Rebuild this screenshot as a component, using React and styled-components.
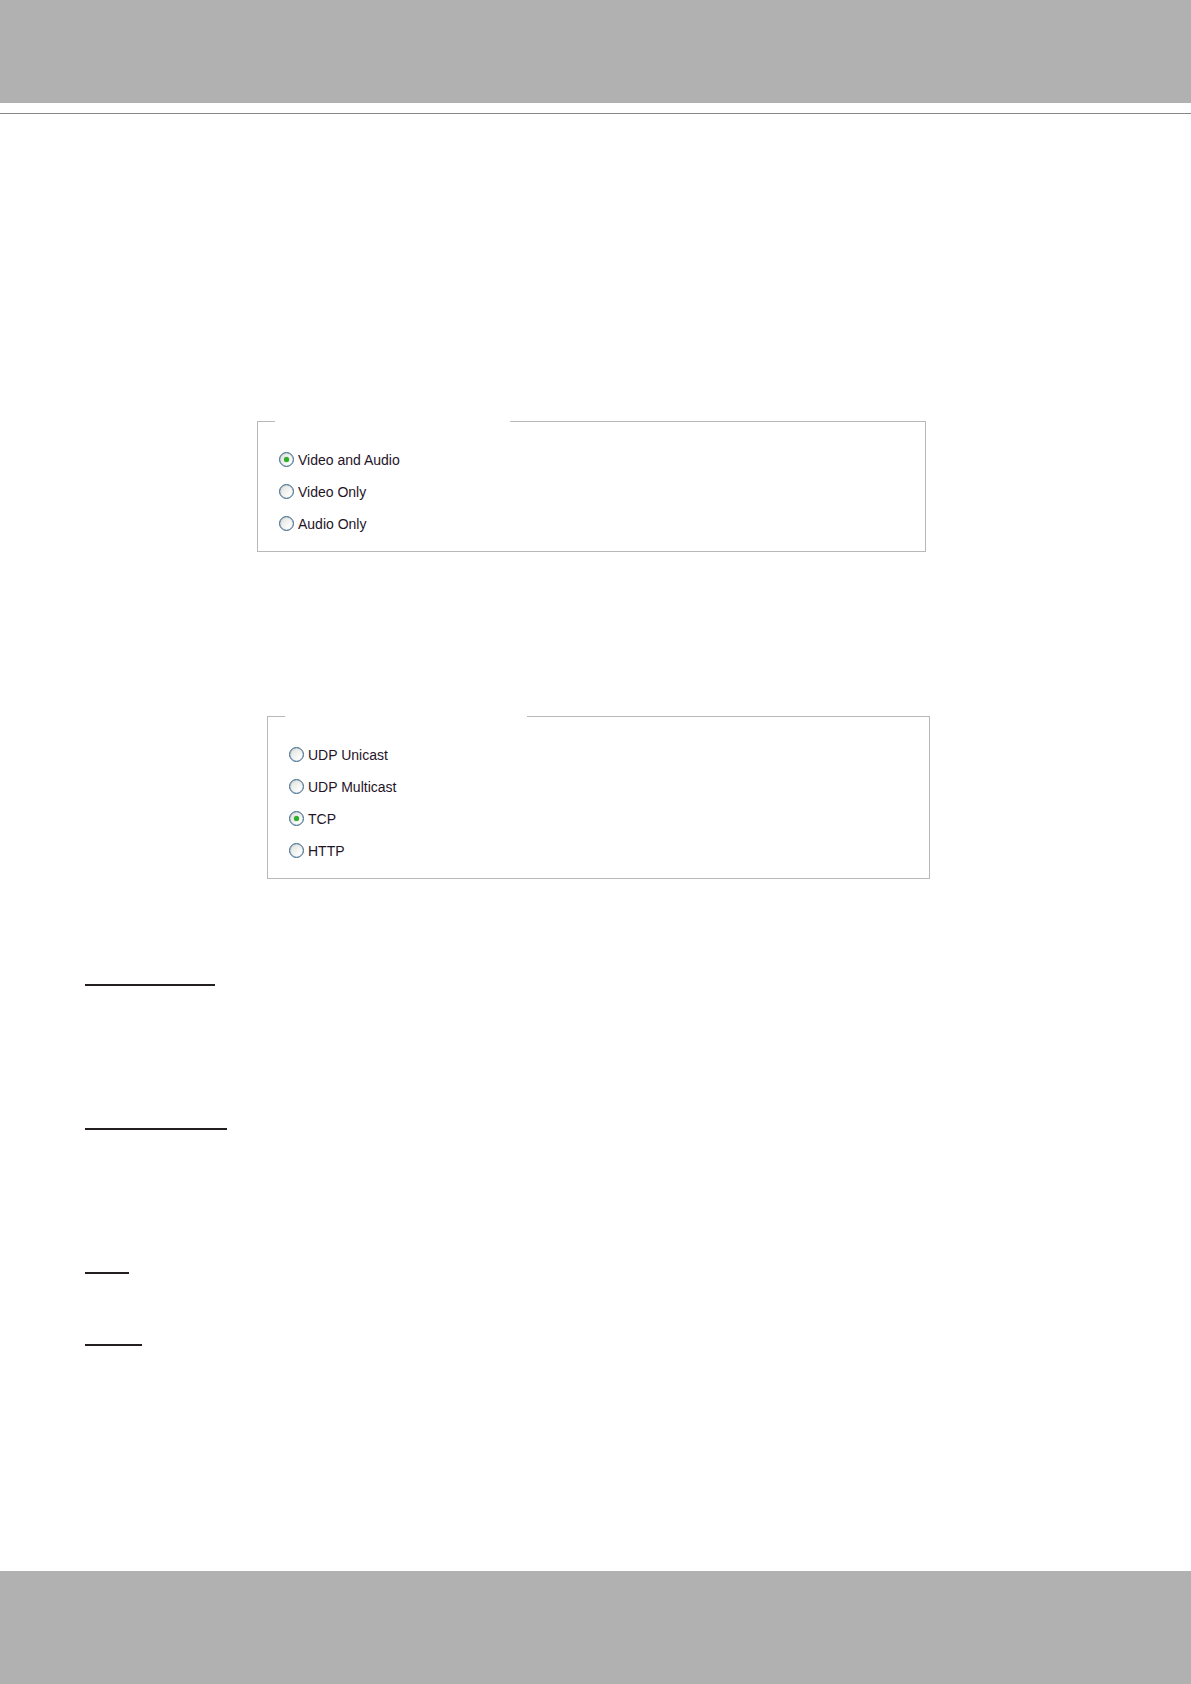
import React, { useState } from 'react';
import styled, { createGlobalStyle } from 'styled-components';

const GlobalStyle = createGlobalStyle`
  * {
    box-sizing: border-box;
  }

  body {
    margin: 0;
    background-color: #ffffff;
    color: #231f20;
    font-family: 'Liberation Sans', Arial, sans-serif;
    font-size: 14px;
  }
`;

const Page = styled.div`
  min-height: 100vh;
  display: flex;
  flex-direction: column;
`;

const Header = styled.header`
  padding-bottom: 10px;
  border-bottom: 1px solid #888888;

  div {
    height: 103px;
    background-color: #b1b1b1;
  }
`;

const Footer = styled.footer`
  height: 113px;
  margin-top: auto;
  background-color: #b1b1b1;
`;

const Main = styled.main`
  padding: 307px 85px 0;
`;

const Group = styled.fieldset`
  min-width: 0;
  margin: ${({ $margin }) => $margin};
  padding: 21px 21px 12px;
  border: 1px solid #b8b8b6;

  legend {
    width: ${({ $gap }) => $gap}px;
    height: 1px;
    margin-left: -4px;
    padding: 0;
  }
`;

const Option = styled.label`
  display: flex;
  align-items: center;
  gap: 4px;
  width: fit-content;
  height: 32px;
  line-height: 16px;
  color: #1f1428;

  span {
    padding-top: 2px;
  }
`;

const Radio = styled.input`
  appearance: none;
  display: grid;
  place-items: center;
  width: 15px;
  height: 15px;
  margin: 0;
  border: 1px solid #3c6788;
  border-radius: 50%;
  background: linear-gradient(135deg, #dededa, #ffffff 80%);
  box-shadow: inset 0 0 1px #3c6788;

  &:checked::before {
    content: '';
    width: 5px;
    height: 5px;
    border-radius: 50%;
    background-color: #2fae2c;
    box-shadow: 0 0 1px #2fae2c;
  }
`;

const Sections = styled.div`
  display: flex;
  flex-direction: column;
  margin-top: 105px;
`;

const Rule = styled.hr`
  width: ${({ $width }) => $width}px;
  height: 2px;
  margin: 0 0 ${({ $space }) => $space}px;
  border: 0;
  background-color: #231f20;
`;

const media = ['Video and Audio', 'Video Only', 'Audio Only'];
const protocols = ['UDP Unicast', 'UDP Multicast', 'TCP', 'HTTP'];

const RadioGroup = ({ name, options, initial, gap, margin }) => {
  const [selected, setSelected] = useState(initial);

  return (
    <Group $gap={gap} $margin={margin} aria-label={name}>
      <legend />
      {options.map((option) => (
        <Option key={option}>
          <Radio
            type='radio'
            name={name}
            value={option}
            checked={selected === option}
            onChange={() => setSelected(option)}
          />
          <span>{option}</span>
        </Option>
      ))}
    </Group>
  );
};

const App = () => {
  return (
    <>
      <GlobalStyle />
      <Page>
        <Header>
          <div />
        </Header>
        <Main>
          <RadioGroup
            name='media'
            options={media}
            initial='Video and Audio'
            gap={235}
            margin='0 180px 164px 172px'
          />
          <RadioGroup
            name='protocol'
            options={protocols}
            initial='TCP'
            gap={242}
            margin='0 176px 0 182px'
          />
          <Sections>
            <Rule $width={130} $space={142} />
            <Rule $width={142} $space={142} />
            <Rule $width={44} $space={70} />
            <Rule $width={57} $space={0} />
          </Sections>
        </Main>
        <Footer />
      </Page>
    </>
  );
};

export default App;
